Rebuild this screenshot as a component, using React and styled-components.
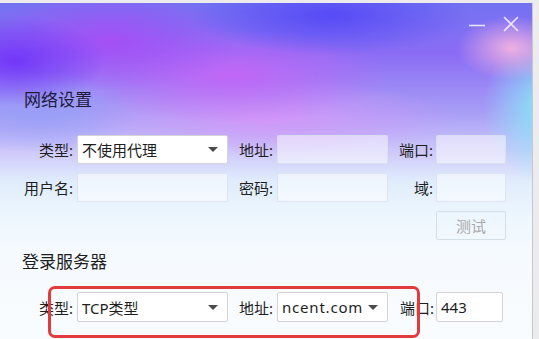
import React from 'react'
import styled, { createGlobalStyle } from 'styled-components'

const GlobalStyle = createGlobalStyle`
  html, body {
    margin: 0;
    padding: 0;
    background: #ececef;
  }
  body {
    font-family: "Noto Sans", "Noto Sans CJK SC", sans-serif;
    color: #1e1e1e;
  }
`

const Frame = styled.div`
  padding-top: 3px;
  width: 539px;
  height: 336px;
  overflow: hidden;
`

const Window = styled.div`
  position: relative;
  width: 532px;
  height: 336px;
  border-right: 1px solid #c8c8cc;
  overflow: hidden;
  display: flex;
  flex-direction: column;
  background:
    radial-gradient(ellipse 90px 45px at 15px 58px, rgba(112, 52, 248, 0.95), rgba(112, 52, 248, 0)),
    radial-gradient(ellipse 130px 50px at 110px 38px, rgba(166, 78, 246, 0.95), rgba(166, 78, 246, 0)),
    radial-gradient(ellipse 140px 40px at 330px 12px, rgba(84, 72, 246, 0.95), rgba(84, 72, 246, 0)),
    radial-gradient(ellipse 160px 48px at 230px 72px, rgba(196, 100, 246, 0.95), rgba(196, 100, 246, 0)),
    radial-gradient(ellipse 190px 38px at 270px 115px, rgba(214, 150, 248, 0.9), rgba(214, 150, 248, 0)),
    radial-gradient(ellipse 55px 32px at 512px 45px, rgba(244, 180, 224, 0.95), rgba(244, 180, 224, 0)),
    radial-gradient(ellipse 62px 75px at 545px 105px, rgba(136, 234, 248, 1), rgba(136, 234, 248, 0)),
    radial-gradient(ellipse 100px 40px at 40px 110px, rgba(150, 158, 248, 0.85), rgba(150, 158, 248, 0)),
    linear-gradient(180deg, #7472f2 0px, #8a6cf4 50px, #a89ef6 110px, #cfcafa 150px, #e0ecfc 178px, #eef7fe 215px, #f5fafe 250px, #f9fcfe 336px);
`

const TitleBar = styled.div`
  height: 87px;
  display: flex;
  justify-content: flex-end;
  align-items: flex-start;
  gap: 18px;
  padding: 13px 13px 0 0;
  box-sizing: border-box;
`

const WinButton = styled.svg`
  display: block;
  width: 16px;
  height: 16px;
  stroke: rgba(255, 255, 255, 0.8);
  stroke-width: 1.6;
  fill: none;
`

const SectionTitle = styled.div`
  font-size: 17px;
  line-height: 20px;
  height: 20px;
  padding-left: ${p => p.$indent}px;
  color: ${p => p.$dark ? '#1b1b3c' : '#1e1e1e'};
  margin-top: ${p => p.$top || 0}px;
`

const FormGrid = styled.div`
  display: grid;
  grid-template-columns: 55px 151px 49px 111px ${p => p.$last}px;
  grid-auto-rows: ${p => p.$row}px;
  row-gap: 9px;
  padding-left: 22px;
  margin-top: ${p => p.$top}px;
  font-size: 15px;
`

const Label = styled.div`
  display: flex;
  align-items: center;
  white-space: nowrap;
  justify-content: ${p => p.$left ? 'flex-start' : 'flex-end'};
  padding-left: ${p => p.$left ? 11 : 0}px;
  padding-right: ${p => p.$left ? 0 : p.$pr ?? 4}px;
`

const Field = styled.div`
  position: relative;
  box-sizing: border-box;
  display: flex;
  align-items: center;
  padding: 0 4px;
  overflow: hidden;
  white-space: nowrap;
  border-radius: 2px;
  border: 1px solid ${p => p.$solid ? '#d4d4d8' : 'rgba(214, 222, 238, 0.75)'};
  background: ${p => p.$solid ? '#ffffff' : 'rgba(255, 255, 255, 0.5)'};
  width: ${p => p.$w ? p.$w + 'px' : 'auto'};
`

const SelectText = styled.div`
  flex: 1;
  overflow: hidden;
  letter-spacing: ${p => p.$spaced ? '0.8px' : 'normal'};
`

const Arrow = styled.span`
  width: 0;
  height: 0;
  margin: 0 5px 0 6px;
  border-left: 5px solid transparent;
  border-right: 5px solid transparent;
  border-top: 5px solid #4a4a4a;
  flex-shrink: 0;
`

const TestButton = styled.div`
  display: flex;
  align-items: center;
  justify-content: center;
  box-sizing: border-box;
  border: 1px solid rgba(210, 220, 232, 0.9);
  border-radius: 2px;
  color: #a8a8ac;
  font-size: 15px;
`

const PortRow = styled.div`
  display: grid;
  grid-template-columns: 48px 70px;
`

const Highlight = styled.div`
  position: absolute;
  left: 48px;
  top: 283px;
  width: 372px;
  height: 52px;
  box-sizing: border-box;
  border: 3px solid #e13b3d;
  border-radius: 7px;
  pointer-events: none;
`

const Select = ({ children, solid, spaced }) => (
  <Field $solid={solid}>
    <SelectText $spaced={spaced}>{children}</SelectText>
    <Arrow />
  </Field>
)

const ProxyPort = ({ label }) => (
  <PortRow>
    <Label $pr={3}>{label}</Label>
    <Field />
  </PortRow>
)

export default function App() {
  return (
    <Frame>
      <GlobalStyle />
      <Window>
        <TitleBar>
          <WinButton viewBox="0 0 16 16">
            <path d="M0 9.5H16" />
          </WinButton>
          <WinButton viewBox="0 0 16 16">
            <path d="M1 1L15 15M15 1L1 15" />
          </WinButton>
        </TitleBar>

        <SectionTitle $indent={24} $dark>网络设置</SectionTitle>
        <FormGrid $top={25} $row={29} $last={119}>
          <Label>类型:</Label>
          <Select solid>不使用代理</Select>
          <Label $left>地址:</Label>
          <Field />
          <ProxyPort label="端口:" />

          <Label>用户名:</Label>
          <Field />
          <Label $left>密码:</Label>
          <Field />
          <ProxyPort label="域:" />

          <div />
          <div />
          <div />
          <div />
          <PortRow>
            <div />
            <TestButton>测试</TestButton>
          </PortRow>
        </FormGrid>

        <SectionTitle $indent={22} $top={12}>登录服务器</SectionTitle>
        <FormGrid $top={20} $row={30} $last={116}>
          <Label>类型:</Label>
          <Select solid>TCP类型</Select>
          <Label $left>地址:</Label>
          <Select solid spaced>ncent.com</Select>
          <PortRow>
            <Label $pr={2}>端口:</Label>
            <Field $solid $w={67}>443</Field>
          </PortRow>
        </FormGrid>

        <Highlight />
      </Window>
    </Frame>
  )
}
